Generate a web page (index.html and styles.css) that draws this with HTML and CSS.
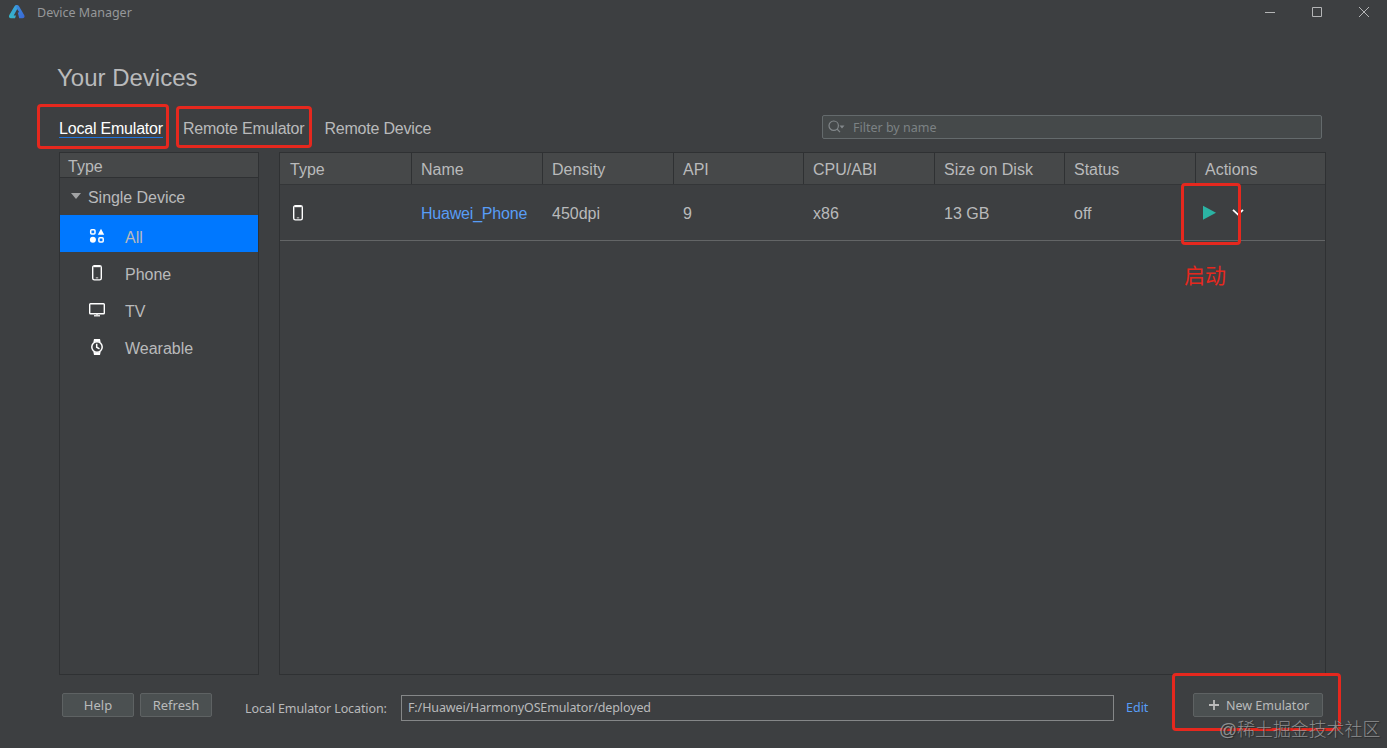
FILE: index.html
```html
<!DOCTYPE html>
<html lang="en">
<head>
<meta charset="utf-8">
<title>Device Manager</title>
<link rel="stylesheet" href="styles.css">
</head>
<body>
<div class="window">
  <header class="titlebar">
    <svg class="logo" width="18" height="16" viewBox="0 0 18 16">
      <defs>
        <linearGradient id="lg" x1="0" y1="1" x2="1" y2="0"><stop offset="0" stop-color="#35b8c6"/><stop offset="1" stop-color="#3a9ae0"/></linearGradient>
        <linearGradient id="rg" x1="0" y1="0" x2="1" y2="1"><stop offset="0" stop-color="#3a8fe0"/><stop offset="1" stop-color="#3a66d4"/></linearGradient>
      </defs>
      <path d="M8.800 1Q7.400 .8 6.500 2.200L1.200 11.300Q.2 14 3 14.300H7L8 11.500H5.700L9.800 4Z" fill="url(#lg)"/>
      <path d="M8.500 1Q10.200 .8 11 2.200L16.300 11.300Q17.300 14 14.500 14.300H11.200L9.800 8.500L11.200 8.300L8.200 3.500Z" fill="url(#rg)"/>
    </svg>
    <span class="app-name">Device Manager</span>
    <svg class="controls" width="106" height="14" viewBox="0 0 106 14" fill="none" stroke="#b4b5b6">
      <path d="M0 6.500H10M47.500 1.500H56.500V10.500H47.500ZM94 1L104 11M104 1L94 11"/>
    </svg>
  </header>

  <main class="content">
    <h1 class="heading">Your Devices</h1>
    <div class="toolbar">
      <nav class="tabs">
        <a class="tab active">Local Emulator</a>
        <a class="tab">Remote Emulator</a>
        <a class="tab">Remote Device</a>
      </nav>
      <div class="filter">
        <svg width="18" height="14" viewBox="0 0 18 14" fill="none" stroke="#82878a" stroke-width="1.2"><circle cx="5.700" cy="5.700" r="4.700"/><path d="M9 9L12 12.200"/><path d="M11.500 5.500H16.500L14 8.500Z" fill="#82878a" stroke="none"/></svg>
        <span>Filter by name</span>
      </div>
    </div>

    <div class="panels">
      <aside class="types">
        <div class="types-head">Type</div>
        <div class="group"><i class="arrow"></i>Single Device</div>
        <div class="item selected">
          <svg width="16" height="16" viewBox="0 0 16 16" fill="none" stroke="#fff" stroke-width="1.5"><rect x="1.700" y="1.700" width="4.300" height="4.300" rx="1"/><path d="M12 .8L15.200 6.700H8.800Z" fill="#fff" stroke="none"/><circle cx="3.900" cy="11.800" r="3" fill="#fff" stroke="none"/><rect x="9.900" y="9.700" width="4.300" height="4.300" rx="1"/></svg>All</div>
        <div class="item">
          <svg width="16" height="16" viewBox="0 0 16 16" fill="none" stroke="#fff" stroke-width="1.400"><rect x="3.700" y=".7" width="8.600" height="14.200" rx="1.700"/><path d="M5 1.500H11"/><path d="M6.800 12.800H9.200" stroke="#aaa"/></svg>Phone</div>
        <div class="item">
          <svg width="16" height="16" viewBox="0 0 16 16" fill="none" stroke="#fff" stroke-width="1.400"><rect x=".7" y="1.700" width="14.600" height="10" rx=".8"/><path d="M7 12.500H9M5 13.800H11" stroke="#ddd"/></svg>TV</div>
        <div class="item">
          <svg width="16" height="16" viewBox="0 0 16 16" fill="none" stroke="#fff" stroke-width="1.500"><path d="M5 0H11L11.700 3.500Q8 1.500 4.300 3.500ZM4.300 12.500Q8 14.500 11.700 12.500L11 16H5Z" fill="#fff" stroke="none"/><circle cx="8" cy="8" r="5.200"/><path d="M7.700 4.800V8.200L10.500 9.800"/></svg>Wearable</div>
      </aside>

      <section class="table">
        <div class="row thead">
          <div>Type</div><div>Name</div><div>Density</div><div>API</div><div>CPU/ABI</div><div>Size on Disk</div><div>Status</div><div>Actions</div>
        </div>
        <div class="row device">
          <div><svg width="16" height="16" viewBox="0 0 16 16" fill="none" stroke="#fff" stroke-width="1.400"><rect x="3.700" y=".7" width="8.600" height="14.200" rx="1.700"/><path d="M5 1.500H11"/><path d="M6.800 12.800H9.200" stroke="#aaa"/></svg></div>
          <div class="link">Huawei_Phone</div><div>450dpi</div><div>9</div><div>x86</div><div>13 GB</div><div>off</div>
          <div class="actions">
            <svg width="42" height="16" viewBox="0 0 42 16"><path d="M0 .7L13 7.700L0 14.700Z" fill="#2bb3a3"/><path d="M30 4.800L35 9.600L40 4.800" fill="none" stroke="#fff" stroke-width="1.800"/></svg>
          </div>
        </div>
      </section>
    </div>

    <footer class="footer">
      <div class="button small">Help</div>
      <div class="button small">Refresh</div>
      <span class="location-label">Local Emulator Location:</span>
      <div class="location">F:/Huawei/HarmonyOSEmulator/deployed</div>
      <a class="edit">Edit</a>
      <div class="button new"><svg width="10" height="10" viewBox="0 0 10 10"><path d="M5 0V10M0 5H10" stroke="#bbb" stroke-width="1.800"/></svg>New Emulator</div>
    </footer>
  </main>

  <div class="mark mark-local"></div>
  <div class="mark mark-remote"></div>
  <div class="mark mark-run"></div>
  <div class="mark mark-new"></div>
  <div class="note">启动</div>
  <div class="watermark">@稀土掘金技术社区</div>
</div>
</body>
</html>
```
FILE: styles.css
```css
* { box-sizing: border-box; }
body {
  margin: 0;
  background: #3d3f41;
  color: #b9babb;
  font: 16px "Liberation Sans", Arial, sans-serif;
}
.window {
  position: relative;
  width: 1387px;
  height: 748px;
  overflow: hidden;
}
.titlebar {
  display: flex;
  align-items: center;
  height: 25px;
  padding: 0 16px 0 8px;
}
.logo { margin-top: -1px; }
.app-name {
  margin-left: 11px;
  font: 12.5px/24px "Noto Sans", sans-serif;
  color: #96989a;
}
.controls { margin-left: auto; }
.content { padding: 0 61px 0 59px; }
.heading {
  margin: 38px 0 0 -2px;
  font-size: 24px;
  font-weight: 400;
  line-height: 30px;
}
.toolbar {
  display: flex;
  align-items: center;
  height: 24px;
  margin-top: 22px;
  padding-right: 4px;
}
.tabs { display: flex; gap: 20px; padding-top: 3px; }
.tab { line-height: 19px; letter-spacing: -0.2px; }
.active { color: #fff; height: 19px; border-bottom: 1px solid #1f74dc; }
.filter {
  display: flex;
  align-items: center;
  gap: 7px;
  width: 500px;
  height: 24px;
  margin-left: auto;
  padding-left: 5px;
  border: 1px solid #646a6c;
  border-radius: 2px;
  background: #45494a;
  font: 12.5px "Noto Sans", sans-serif;
  color: #7c8284;
}
.panels { display: flex; gap: 20px; height: 523px; margin-top: 13px; }
.types { width: 200px; border: 1px solid #2f3133; }
.types-head {
  height: 25px;
  padding-left: 8px;
  border-bottom: 1px solid #2f3133;
  background: #464849;
  line-height: 27px;
}
.group {
  display: flex;
  align-items: center;
  height: 37px;
  padding: 2px 0 0 11px;
  letter-spacing: -0.05px;
}
.arrow {
  margin: -3px 7px 0 0;
  border: 5px solid transparent;
  border-top: 6px solid #a2a3a4;
  border-bottom: 0;
}
.item {
  display: flex;
  align-items: center;
  gap: 20px;
  height: 37px;
  padding: 8px 0 0 29px;
}
.item svg { margin-top: -3px; }
.selected { background: #0078ff; }
.table {
  width: 1047px;
  border: 1px solid #2f3133;
}
.row {
  display: grid;
  grid-template-columns: 132px repeat(2, 131px) 130px 131px 130px 131px 1fr;
  align-items: center;
}
.row > div { padding-left: 9px; }
.row > div:first-child { padding-left: 10px; }
.thead {
  height: 32px;
  border-bottom: 1px solid #343638;
  background: #464849;
}
.thead > div {
  height: 31px;
  border-right: 1px solid #2f3133;
  line-height: 33px;
}
.thead > div:last-child { border-right: 0; }
.device { height: 56px; padding-top: 2px; border-bottom: 1px solid #636566; }
.device svg { display: block; margin-top: -1px; }
.device > div:first-child { display: flex; }
.link { color: #589df6; letter-spacing: -0.2px; }
.row > .actions { padding-left: 7px; }
.footer {
  display: flex;
  align-items: flex-start;
  padding: 18px 3px 0 3px;
  font: 13px/24px "Noto Sans", sans-serif;
}
.button {
  display: flex;
  align-items: center;
  justify-content: center;
  height: 24px;
  border: 1px solid #5e6263;
  border-radius: 2px;
  background: #4b5051;
}
.small { width: 72px; margin-right: 6px; }
.location-label { margin: 4px 0 0 27px; width: 156px; font-size: 12.5px; letter-spacing: -0.1px; white-space: nowrap; }
.location {
  width: 713px;
  height: 26px;
  margin-top: 2px;
  padding-left: 6px;
  border: 1px solid #858788;
  font-size: 12.5px;
  letter-spacing: -0.12px;
}
.edit { margin: 3px 0 0 12px; color: #589df6; font-size: 12.5px; }
.new { width: 130px; gap: 7px; margin-left: auto; padding: 1px 0 0 2px; font-size: 12.5px; }
.new svg { margin-top: -1px; }
.mark {
  position: absolute;
  border: 3px solid #e6281e;
  border-radius: 4px;
}
.mark-local { left: 37px; top: 104px; width: 132px; height: 45px; }
.mark-remote { left: 176px; top: 106px; width: 136px; height: 42px; }
.mark-run { left: 1181px; top: 183px; width: 60px; height: 62px; }
.mark-new { left: 1172px; top: 673px; width: 169px; height: 58px; }
.note {
  position: absolute;
  left: 1184px;
  top: 259px;
  color: #e6281e;
  font: 21px/30px "Noto Sans CJK SC", sans-serif;
}
.watermark {
  position: absolute;
  left: 1219px;
  top: 717px;
  color: rgba(165, 166, 167, 0.8);
  font: 300 17.9px/26px "Liberation Sans", "Noto Sans CJK SC", sans-serif;
  text-shadow: 1px 1px 1px #2a2b2c;
  white-space: nowrap;
}
```
